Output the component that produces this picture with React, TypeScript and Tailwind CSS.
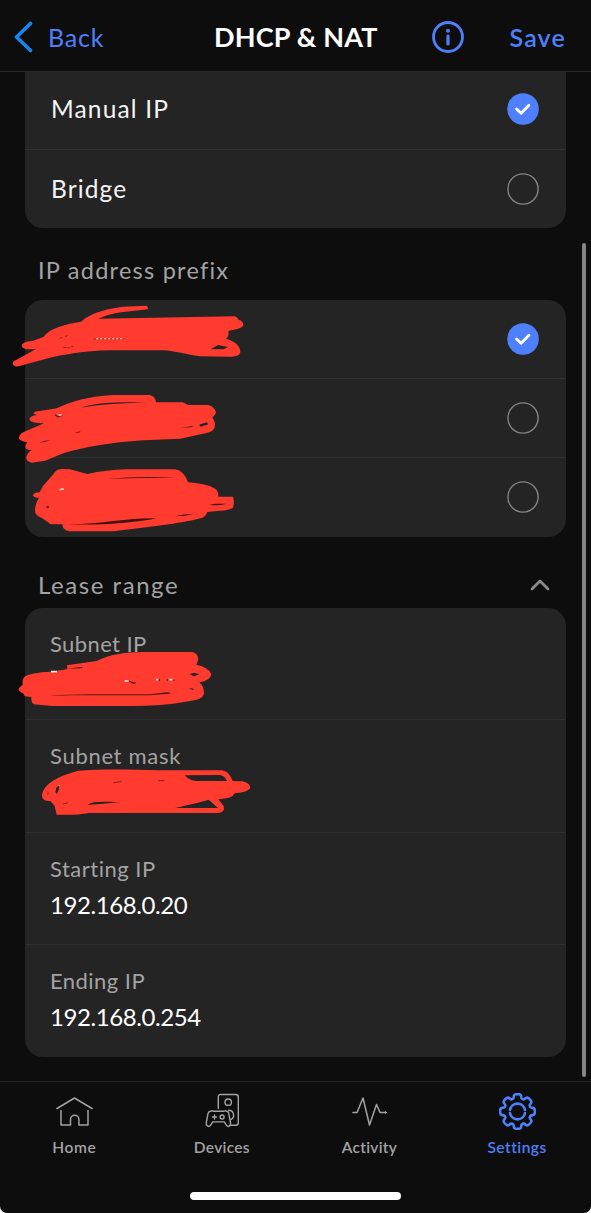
import React from "react";

const gearPath = (() => {
  const pts: [number, number][] = [];
  for (let k = 0; k < 8; k++) {
    for (const [offset, r] of [[-12, 17.2], [0, 17.6], [12, 17.2], [15, 14], [22.5, 13.2], [30, 14]]) {
      const a = ((k * 45 + offset - 90) * Math.PI) / 180;
      pts.push([18.5 + r * Math.cos(a), 18.5 + r * Math.sin(a)]);
    }
  }
  const f = (n: number) => n.toFixed(2);
  const mid = (a: number[], b: number[]) => `${f((a[0] + b[0]) / 2)},${f((a[1] + b[1]) / 2)}`;
  let d = `M${mid(pts[pts.length - 1], pts[0])}`;
  pts.forEach((p, i) => {
    d += `Q${f(p[0])},${f(p[1])} ${mid(p, pts[(i + 1) % pts.length])}`;
  });
  return d + "Z";
})();

function Radio({ checked = false }: { checked?: boolean }) {
  return (
    <svg className="size-8 shrink-0" viewBox="0 0 32 32" fill="none">
      {checked ? (
        <>
          <circle cx="16" cy="16" r="15.8" fill="#4d80fa" />
          <path d="M9.6 16l4.500 4.300 7.800-8" stroke="#fff" strokeWidth="2.800" strokeLinecap="round" strokeLinejoin="round" />
        </>
      ) : (
        <circle cx="16" cy="16" r="15.1" stroke="#858585" strokeWidth="1.4" />
      )}
    </svg>
  );
}

function Option({ label, labelClass = "", checked, className }: {
  label?: string; labelClass?: string; checked?: boolean; className: string;
}) {
  return (
    <div className={`flex items-center justify-between pl-[26px] pr-[27px] ${className}`}>
      <span className={`text-[24.5px] leading-8 text-[#f5f5f5] ${labelClass}`}>{label}</span>
      <Radio checked={checked} />
    </div>
  );
}

function Field({ label, labelClass, value, valueClass = "", className }: {
  label: string; labelClass: string; value?: string; valueClass?: string; className: string;
}) {
  return (
    <div className={`flex flex-col pl-[25px] pt-[22px] ${className}`}>
      <span className={`text-[22px] leading-7 text-[#a3a3a3] ${labelClass}`}>{label}</span>
      {value && <span className={`mt-[6px] self-start text-[24px] leading-8 text-white ${valueClass}`}>{value}</span>}
    </div>
  );
}

function Tab({ label, labelClass, active, children }: {
  label: string; labelClass: string; active?: boolean; children: React.ReactNode;
}) {
  return (
    <div className={`flex w-[147.6px] flex-col items-center ${active ? "text-[#4d80fa]" : "text-[#a3a3a3]"}`}>
      <svg className="h-[37px] w-[37px]" viewBox="0 0 37 37" fill="none" stroke="currentColor" strokeLinecap="round" strokeLinejoin="round">
        {children}
      </svg>
      <span className={`mt-[7px] text-[15.5px] font-semibold leading-5 ${labelClass}`}>{label}</span>
    </div>
  );
}

function Scribbles() {
  return (
    <svg className="pointer-events-none absolute left-0 top-0 h-[1213px] w-[591px]" viewBox="0 0 591 1213" fill="#ff3b30" fillRule="evenodd">
      <g transform="translate(0 240) scale(.33333)">
        <path d="M38 372Q38 362 50 359L108 327Q64 332 65 314Q72 304 100 302L130 291C150 263 200 252 243 245C275 215 330 205 370 200L438 197Q446 200 443 208L370 216C340 219 320 226 295 236L705 229Q715 234 716 240Q730 242 730 256Q726 268 685 272Q688 290 678 296C710 305 722 322 721 337Q718 350 694 350L600 349C560 345 525 332 490 331L330 331C250 332 190 345 150 353L55 379Q42 382 38 372ZM632 328L654 315L684 321L670 328Z" />
        <path d="M178 296l9-4m8-2l8-4M190 322l15 1 15-4M280 297h90" stroke="#9f201b" strokeWidth="3" strokeDasharray="9 3" fill="none" />
        <path d="M288 296h84" stroke="#ffb5ae" strokeWidth="4" strokeDasharray="7 5" fill="none" />
      </g>
      <g transform="translate(0 380) scale(.33333)">
        <path d="M100 100Q105 93 120 93L170 85C210 65 260 50 340 45L450 45Q466 49 468 67L548 67L564 75L625 75Q643 80 648 97Q647 106 637 112Q646 125 645 138Q642 155 620 159L540 176L430 181C330 187 250 202 190 220L135 242L95 248Q78 245 79 232Q82 217 96 210Q75 211 76 198L82 187Q57 182 56 173Q60 158 80 152L132 130Q91 130 88 118Q91 107 110 106ZM242 83C290 66 360 66 442 67C350 70 290 75 242 83ZM597 134L620 127L625 133L602 140Z" />
        <path d="M118 188Q132 181 153 180Q138 187 118 188ZM222 158L242 154L238 158ZM540 145L578 137L578 141Z" fill="#64201c" />
        <path d="M165 104l8 6 14-4" stroke="#64201c" strokeWidth="4" fill="none" /><path d="M176 105h9" stroke="#eee" strokeWidth="4" />
        <path d="M99 345Q102 337 119 337L129 318L160 283Q166 268 185 267L210 268L262 282C300 274 340 269 380 268L525 268Q552 272 564 307C610 310 640 320 650 330Q656 339 655 350L699 350Q704 364 699 383Q690 391 660 392L622 396Q617 411 602 415C540 431 440 442 340 454L207 454Q187 449 187 433L152 433Q142 424 125 414Q105 405 105 392Q106 370 117 353Q101 355 99 345Z" />
        <path d="M205 433C310 431 400 412 470 415C420 426 320 437 205 433ZM525 409Q550 402 582 401Q555 409 525 409ZM628 375L645 371H680Q655 378 628 375ZM320 296Q420 288 528 293Q420 293 320 296Z" fill="#421411" />
        <circle cx="143" cy="381" r="4" fill="#64201c" /><path d="M179 329l12-2" stroke="#eee" strokeWidth="4" />
      </g>
      <g transform="translate(0 560) scale(.33333)">
        <path d="M201 316L290 303C330 283 370 277 430 276H577Q594 280 595 299L589 314Q626 322 634 342Q632 362 598 367Q613 380 612 402Q606 419 570 423C510 435 450 438 390 438H155L102 433Q93 429 94 411L74 409L70 400Q55 396 56 385L68 374Q64 350 84 345C120 334 160 337 202 327ZM568 342L582 349L598 343L583 338ZM565 385L578 390L582 386Z" />
        <path d="M202 326L247 320L246 325ZM148 408Q200 402 300 403H450L500 397Q520 399 508 401L450 406H210ZM378 360L410 369L400 372Z" fill="#561713" />
        <path d="M153 335h18M374 363h12M468 359h7M508 359h9" stroke="#f5e8e5" strokeWidth="5" />
        <path d="M478 358v4M502 358v4M522 359v3" stroke="#561713" strokeWidth="4" />
      </g>
      <g transform="translate(0 720) scale(.33333)">
        <path d="M126 229C126 198 165 170 235 152C300 147 380 148 480 151H665Q688 153 698 183L727 184Q750 189 751 203Q748 215 704 220Q698 236 655 238L671 258Q676 275 657 279H268C240 284 210 285 170 284L164 258L151 243Q128 245 126 229ZM554 166Q568 182 590 183H681Q674 167 660 165ZM525 264H654L626 239C600 247 565 254 525 264ZM166 216L170 201L179 196L176 211L170 222ZM263 254C280 243 310 245 360 247C320 249 290 255 263 254Z" />
        <path d="M144 224v-7M340 188l25-3M475 182h18M188 252l16-4" stroke="#8c201b" strokeWidth="3" fill="none" />
        <path d="M177 195l2 4" stroke="#eee" strokeWidth="2" />
      </g>
    </svg>
  );
}

export default function App() {
  return (
    <div className="bg-white">
      <div className="relative flex h-[1213px] w-[591px] flex-col overflow-hidden rounded-b-[7px] bg-[#0d0d0d] font-['Lato','Open_Sans',sans-serif]">
        <header className="flex h-[72px] shrink-0 items-center border-b border-[#292929] pb-[3px] pl-[14px] pr-[25px] pt-[5px]">
          <div className="flex w-[200px] items-center text-[#4d80fa]">
            <svg className="h-8 w-5" viewBox="0 0 20 32" fill="none">
              <path d="M16.500 2.500L2.500 16l14 13.500" stroke="#1687ef" strokeWidth="3.6" strokeLinecap="round" strokeLinejoin="round" />
            </svg>
            <span className="ml-[14px] text-[25px] leading-8 tracking-[0.8px]">Back</span>
          </div>
          <h1 className="w-[218px] whitespace-nowrap text-[27px] font-bold leading-8 tracking-[0.2px] text-white">DHCP &amp; NAT</h1>
          <svg className="size-8" viewBox="0 0 32 32" fill="none" stroke="#4d80fa">
            <circle cx="16" cy="16" r="14.5" strokeWidth="2.8" />
            <path d="M16 15v8" strokeWidth="3.2" strokeLinecap="round" />
            <circle cx="16" cy="9.8" r="2" fill="#4d80fa" stroke="none" />
          </svg>
          <span className="ml-auto text-[25px] font-semibold leading-8 tracking-[1.2px] text-[#4d80fa]">Save</span>
        </header>

        <main className="flex h-[1009px] shrink-0 flex-col px-[25px]">
          <section className="flex h-[156px] flex-col rounded-b-[18px] bg-[#242424]">
            <Option label="Manual IP" labelClass="tracking-[1.15px]" checked className="h-[78px] border-b border-[#303030] pb-[3px]" />
            <Option label="Bridge" labelClass="tracking-[1.1px]" className="h-[78px]" />
          </section>
          <h2 className="mt-[26px] pl-[13px] text-[23.5px] leading-8 tracking-[1.25px] text-[#a3a3a3]">IP address prefix</h2>
          <section className="mt-[14px] flex h-[237px] flex-col rounded-[18px] bg-[#242424]">
            <Option checked className="h-[79px] border-b border-[#303030] pb-px" />
            <Option className="h-[79px] border-b border-[#303030]" />
            <Option className="h-[79px] pb-px" />
          </section>
          <div className="mt-[32px] flex h-8 items-center justify-between pl-[13px] pr-[16px]">
            <h2 className="text-[24px] leading-8 tracking-[1.55px] text-[#a3a3a3]">Lease range</h2>
            <svg className="h-3 w-5" viewBox="0 0 20 12" fill="none">
              <path d="M2 10l8-8 8 8" stroke="#8a8a8a" strokeWidth="2.8" strokeLinecap="round" strokeLinejoin="round" />
            </svg>
          </div>
          <section className="mt-[7px] flex h-[449px] flex-col rounded-[18px] bg-[#242424]">
            <Field label="Subnet IP" labelClass="tracking-[0.4px]" className="h-[112px] border-b border-[#303030]" />
            <Field label="Subnet mask" labelClass="tracking-[0.7px]" className="h-[113px] border-b border-[#303030]" />
            <Field label="Starting IP" labelClass="tracking-[0.5px]" value="192.168.0.20" valueClass="tracking-[-0.42px]" className="h-[112px] border-b border-[#303030]" />
            <Field label="Ending IP" labelClass="tracking-[0.45px]" value="192.168.0.254" valueClass="tracking-[-0.42px]" className="h-[112px]" />
          </section>
        </main>

        <nav className="flex h-[111px] shrink-0 border-t border-[#242424] pl-[0.5px] pt-[11px]">
          <Tab label="Home" labelClass="tracking-[0.6px]">
            <g strokeWidth="1.5">
              <path d="M1 15.5L18.5 5 36 15.5M5 17.5V32h9.5v-5.5a4.2 4.2 0 0 1 8.4 0V32H32V17.5" />
            </g>
          </Tab>
          <Tab label="Devices" labelClass="tracking-[0.3px]">
            <g strokeWidth="1.4" transform="translate(0.5 0)">
              <path d="M14.8 15.5V4q0-2.5 2.5-2.5h15q2.5 0 2.5 2.5v25.8q0 2.5-2.5 2.5h-4.8" />
              <circle cx="24.7" cy="9.2" r="3.2" />
              <path d="M25.2 17.2a5 5 0 0 1 2.6 9.2M7.2 18.2q1-.8 2.4 0h10.8q1.4-.8 2.6 0 2 0 2.3 2.5l1.7 9q.3 3-1.8 3.7-1.500.400-2.900-2l-1.500-2.500H9.200l-1.500 2.500q-1.400 2.400-3 2Q2.400 32.700 2.800 29.700l1.700-9q.6-2.500 2.700-2.500ZM11 22v4M9 24h4" />
              <circle cx="18.600" cy="24" r="2" />
            </g>
          </Tab>
          <Tab label="Activity" labelClass="tracking-[0.3px]">
            <path d="M2 19.500h4L12 5l6.500 27L25.500 11.500l3.500 8h6" strokeWidth="1.500" />
            <circle cx="34.500" cy="19.500" r=".8" fill="currentColor" />
          </Tab>
          <Tab label="Settings" labelClass="tracking-[0.5px]" active>
            <path d={gearPath} strokeWidth="2.600" />
            <path d="M11 17a7.600 7.600 0 0 1 15 0M11 20a7.600 7.600 0 0 0 15 0" strokeWidth="2.600" />
          </Tab>
        </nav>
        <div className="mx-auto h-2 w-[211px] shrink-0 rounded-full bg-white" />

        <div className="absolute left-[582px] top-[243px] h-[834px] w-[4px] rounded-full bg-[#858585]" />
        <Scribbles />
      </div>
    </div>
  );
}
